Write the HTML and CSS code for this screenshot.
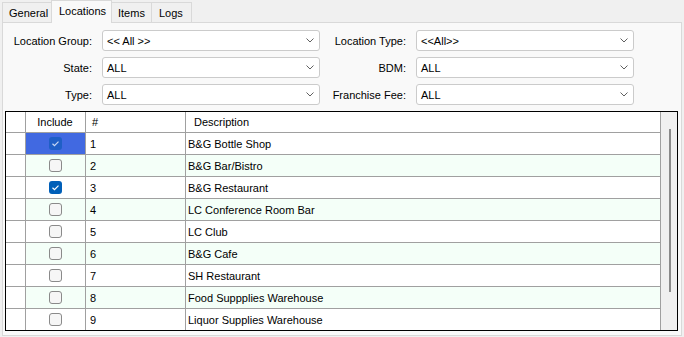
FILE: index.html
```html
<!DOCTYPE html>
<html>
<head>
<meta charset="utf-8">
<link rel="stylesheet" href="styles.css">
</head>
<body>
<div class="window">
  <div class="tabs">
    <div class="tab w-general">General</div>
    <div class="tab tab-active w-locations">Locations</div>
    <div class="tab w-items">Items</div>
    <div class="tab w-logs">Logs</div>
  </div>
  <div class="panel">
    <div class="filters">
      <div class="label">Location Group:</div>
      <div class="select"><span>&lt;&lt; All &gt;&gt;</span><svg class="chev" width="8" height="5" viewBox="0 0 8 5"><polyline points="0.5,0.5 4,4 7.5,0.5"/></svg></div>
      <div class="label">Location Type:</div>
      <div class="select"><span>&lt;&lt;All&gt;&gt;</span><svg class="chev" width="8" height="5" viewBox="0 0 8 5"><polyline points="0.5,0.5 4,4 7.5,0.5"/></svg></div>

      <div class="label">State:</div>
      <div class="select"><span>ALL</span><svg class="chev" width="8" height="5" viewBox="0 0 8 5"><polyline points="0.5,0.5 4,4 7.5,0.5"/></svg></div>
      <div class="label">BDM:</div>
      <div class="select"><span>ALL</span><svg class="chev" width="8" height="5" viewBox="0 0 8 5"><polyline points="0.5,0.5 4,4 7.5,0.5"/></svg></div>

      <div class="label">Type:</div>
      <div class="select"><span>ALL</span><svg class="chev" width="8" height="5" viewBox="0 0 8 5"><polyline points="0.5,0.5 4,4 7.5,0.5"/></svg></div>
      <div class="label">Franchise Fee:</div>
      <div class="select"><span>ALL</span><svg class="chev" width="8" height="5" viewBox="0 0 8 5"><polyline points="0.5,0.5 4,4 7.5,0.5"/></svg></div>
    </div>

    <div class="frame-outer">
      <div class="frame">
        <div class="table">
          <div class="row head">
            <div class="cell rh"></div>
            <div class="cell c-inc">Include</div>
            <div class="cell c-num">#</div>
            <div class="cell c-desc">Description</div>
          </div>
          <div class="row">
            <div class="cell rh"></div>
            <div class="cell c-inc sel"><span class="cb on selcb"><svg width="13" height="13" viewBox="0 0 13 13"><polyline points="3.5,6.7 5.5,8.6 9.5,4.6"/></svg></span></div>
            <div class="cell c-num">1</div>
            <div class="cell c-desc">B&amp;G Bottle Shop</div>
          </div>
          <div class="row alt">
            <div class="cell rh"></div>
            <div class="cell c-inc"><span class="cb"></span></div>
            <div class="cell c-num">2</div>
            <div class="cell c-desc">B&amp;G Bar/Bistro</div>
          </div>
          <div class="row">
            <div class="cell rh"></div>
            <div class="cell c-inc"><span class="cb on"><svg width="13" height="13" viewBox="0 0 13 13"><polyline points="3.5,6.7 5.5,8.6 9.5,4.6"/></svg></span></div>
            <div class="cell c-num">3</div>
            <div class="cell c-desc">B&amp;G Restaurant</div>
          </div>
          <div class="row alt">
            <div class="cell rh"></div>
            <div class="cell c-inc"><span class="cb"></span></div>
            <div class="cell c-num">4</div>
            <div class="cell c-desc">LC Conference Room Bar</div>
          </div>
          <div class="row">
            <div class="cell rh"></div>
            <div class="cell c-inc"><span class="cb"></span></div>
            <div class="cell c-num">5</div>
            <div class="cell c-desc">LC Club</div>
          </div>
          <div class="row alt">
            <div class="cell rh"></div>
            <div class="cell c-inc"><span class="cb"></span></div>
            <div class="cell c-num">6</div>
            <div class="cell c-desc">B&amp;G Cafe</div>
          </div>
          <div class="row">
            <div class="cell rh"></div>
            <div class="cell c-inc"><span class="cb"></span></div>
            <div class="cell c-num">7</div>
            <div class="cell c-desc">SH Restaurant</div>
          </div>
          <div class="row alt">
            <div class="cell rh"></div>
            <div class="cell c-inc"><span class="cb"></span></div>
            <div class="cell c-num">8</div>
            <div class="cell c-desc">Food Suppplies Warehouse</div>
          </div>
          <div class="row">
            <div class="cell rh"></div>
            <div class="cell c-inc"><span class="cb"></span></div>
            <div class="cell c-num">9</div>
            <div class="cell c-desc">Liquor Supplies Warehouse</div>
          </div>
        </div>
        <div class="vscroll"><div class="thumb"></div></div>
      </div>
    </div>
  </div>
</div>
</body>
</html>
```

FILE: styles.css
```css
* { box-sizing: border-box; }
html, body {
  margin: 0;
  padding: 0;
  background: #f0f0f0;
  font-family: "Liberation Sans", Arial, sans-serif;
  font-size: 11px;
  color: #000;
}
.window {
  width: 684px;
  height: 337px;
  overflow: hidden;
}
.tabs {
  display: flex;
  align-items: flex-end;
  height: 22px;
  padding-left: 2px;
}
.tab {
  height: 20px;
  line-height: 20px;
  padding-left: 6px;
  border: 1px solid #d9d9d9;
  border-bottom: none;
  background: #f0f0f0;
  margin-right: -1px;
  white-space: nowrap;
}
.tab-active {
  height: 23px;
  line-height: 20px;
  background: #f9f9f9;
  position: relative;
  z-index: 2;
  margin-bottom: -1px;
  padding-left: 7px;
}
.w-general { width: 50px; }
.w-locations { width: 61px; }
.w-items { width: 41px; }
.w-logs { width: 41px; padding-left: 7px; }

.panel {
  margin-left: 2px;
  width: 680px;
  height: 314px;
  border: 1px solid #d9d9d9;
  background: #f9f9f9;
  position: relative;
  z-index: 1;
}
.filters {
  display: grid;
  grid-template-columns: 89px 218px 76px 218px;
  grid-auto-rows: 21px;
  column-gap: 10px;
  row-gap: 6px;
  padding-top: 7px;
}
.label {
  text-align: right;
  align-self: center;
  white-space: nowrap;
}
.select {
  display: flex;
  align-items: center;
  justify-content: space-between;
  height: 21px;
  border: 1px solid #cbcbcb;
  border-radius: 3px;
  background: #fff;
  padding: 0 5px 0 4px;
}
.chev polyline {
  fill: none;
  stroke: #606060;
  stroke-width: 1;
}

.frame-outer {
  margin: 6px 0 0 2px;
  width: 674px;
}
.frame {
  display: flex;
  width: 673px;
  height: 220px;
  border: 1px solid #000;
  background: #fff;
}
.table {
  width: 655px;
  height: 218px;
  overflow: hidden;
}
.row {
  display: grid;
  grid-template-columns: 20px 60px 100px 475px;
  height: 22px;
  border-bottom: 1px solid #a0a0a0;
  background: #fff;
}
.row.head {
  height: 21px;
}
.row.alt { background: #f4fff8; }
.cell {
  border-right: 1px solid #a0a0a0;
  display: flex;
  align-items: center;
  white-space: nowrap;
  overflow: hidden;
}
.rh { background: #fff; }
.c-inc { justify-content: center; }
.c-num { padding-left: 4px; }
.c-desc { padding-left: 2px; }
.head .c-num { padding-left: 6px; }
.head .c-desc { padding-left: 8px; }
.head .c-inc { padding-right: 1px; }
.sel { background: #4169e1; }

.cb {
  display: block;
  width: 13px;
  height: 13px;
  border: 1px solid #8a8a8a;
  border-radius: 3px;
  background: #f6f6f6;
}
.cb.on {
  border: none;
  background: #005fb8;
}
.cb.selcb { background: #1f5fc6; }
.cb svg { display: block; }
.cb polyline {
  fill: none;
  stroke: #fff;
  stroke-width: 1.2;
}
.selcb polyline { stroke: #c8d8f4; }

.vscroll {
  width: 16px;
  height: 218px;
  background: #f0f0f0;
  padding: 17px 0 0 8px;
}
.thumb {
  width: 2px;
  height: 163px;
  background: #8a8a8a;
}
```
